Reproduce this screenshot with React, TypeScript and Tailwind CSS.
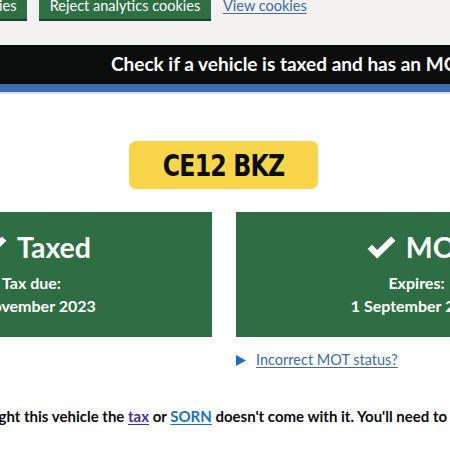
import React from "react";

const Tick = ({ className }: { className?: string }) => (
  <svg viewBox="0 0 30 24" className={className} aria-hidden>
    <path d="M0.5 13.5 L5 9 L10.5 14.5 L25 0.5 L29.5 5 L10.5 23.5 Z" fill="#ffffff" />
  </svg>
);

const Triangle = () => (
  <svg viewBox="0 0 10 11" className="w-[10px] h-[11px]" aria-hidden>
    <path d="M0 0 L10 5.5 L0 11 Z" fill="#1d70b8" />
  </svg>
);

export default function App() {
  const font = { fontFamily: "Lato, 'Noto Sans', 'Liberation Sans', sans-serif" };
  return (
    <div className="w-[450px] h-[450px] overflow-hidden bg-white" style={font}>
      {/* cookie banner */}
      <div className="bg-[#f3f2f1] h-[45px] flex flex-col">
        <div className="w-[746px] ml-[-149px] mt-[-14px] flex items-start gap-[12px]">
          <div className="h-[33px] pt-[7px] w-[176px] flex items-center justify-center bg-[#2f6f44] text-white text-[14.5px] whitespace-nowrap shadow-[0_2px_0_#1b4228]">
            Accept analytics cookies
          </div>
          <div className="h-[33px] pt-[7px] w-[172px] flex items-center justify-center bg-[#2f6f44] text-white text-[14.5px] whitespace-nowrap shadow-[0_2px_0_#1b4228]">
            Reject analytics cookies
          </div>
          <a className="text-[14.5px] text-[#3e6aa6] underline underline-offset-2 h-[33px] pt-[7px] flex items-center whitespace-nowrap" href="#">
            View cookies
          </a>
        </div>
      </div>
      {/* header */}
      <div className="bg-[#0b0c0c] h-[39px] flex items-center">
        <div className="w-[746px] ml-[-149px] shrink-0 pl-[260px] text-white font-bold text-[19px] whitespace-nowrap">
          Check if a vehicle is taxed and has an MOT
        </div>
      </div>
      <div className="h-[8px] bg-[#3f6faa]" />
      <div className="h-[2px] bg-[#d3e3f2]" />

      <div className="w-[746px] ml-[-149px]">
        {/* plate */}
        <div className="flex justify-center pt-[47px]">
          <div className="w-[189px] h-[48px] rounded-[7px] bg-[#f8d54a] flex items-center justify-center ml-[-1px]">
            <span
              className="font-bold text-[31px] text-[#0b0c0c] tracking-[-1px] inline-block scale-x-[0.85]"
              style={{ fontFamily: "'DejaVu Sans Condensed', 'DejaVu Sans', sans-serif" }}
            >
              CE12 BKZ
            </span>
          </div>
        </div>

        {/* cards */}
        <div className="mt-[23px] flex gap-[24px]">
          <div className="w-[361px] h-[125px] bg-[#2f6e44] text-white flex flex-col items-center pt-[17px]">
            <div className="flex items-center gap-[10px] h-[36px] ml-[6px]">
              <Tick className="w-[29px] h-[23px]" />
              <span className="font-bold text-[28.5px] leading-[36px]">Taxed</span>
            </div>
            <div className="mt-[6px] font-bold text-[16px] leading-[23px]">Tax due:</div>
            <div className="font-bold text-[16px] leading-[23px]">1 November 2023</div>
          </div>
          <div className="w-[361px] h-[125px] bg-[#2f6e44] text-white flex flex-col items-center pt-[17px]">
            <div className="flex items-center gap-[10px] h-[36px] ml-[6px]">
              <Tick className="w-[29px] h-[23px]" />
              <span className="font-bold text-[28.5px] leading-[36px]">MOT</span>
            </div>
            <div className="mt-[6px] font-bold text-[16px] leading-[23px]">Expires:</div>
            <div className="font-bold text-[16px] leading-[23px]">1 September 2024</div>
          </div>
        </div>

        {/* details links */}
        <div className="mt-[12px] flex gap-[24px]">
          <div className="w-[361px] flex items-center gap-[10px] h-[22px]">
            <Triangle />
            <a href="#" className="text-[14.5px] text-[#3e6aa6] underline underline-offset-2 whitespace-nowrap">
              Incorrect tax status?
            </a>
          </div>
          <div className="w-[361px] flex items-center gap-[10px] h-[22px]">
            <Triangle />
            <a href="#" className="text-[14.5px] text-[#3e6aa6] underline underline-offset-2 whitespace-nowrap">
              Incorrect MOT status?
            </a>
          </div>
        </div>

        {/* bottom text */}
        <p className="mt-[33px] pl-[34px] font-bold text-[15px] text-[#0b0c0c] whitespace-nowrap leading-[24px]">
          If you've just bought this vehicle the{" "}
          <a href="#" className="text-[#4c2c92] underline underline-offset-2">tax</a> or{" "}
          <a href="#" className="text-[#1d70b8] underline underline-offset-2">SORN</a> doesn't come with it.
          You'll need to <a href="#" className="text-[#1d70b8] underline underline-offset-2">tax this vehicle</a> before you use it.
        </p>
      </div>
    </div>
  );
}
